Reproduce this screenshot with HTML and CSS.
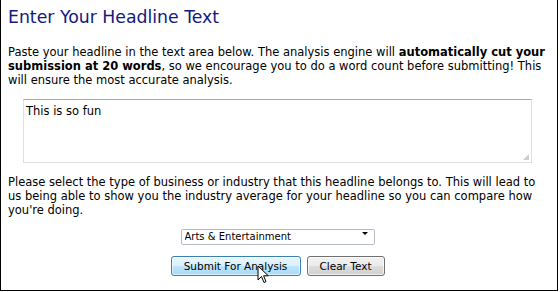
FILE: index.html
```html
<!DOCTYPE html>
<html lang="en">
<head>
  <meta charset="UTF-8" />
  <title>Headline Analyzer</title>
  <link rel="stylesheet" href="styles.css">
</head>
<body>

  <div class="panel">
    <h1>Enter Your Headline Text</h1>

    <p>Paste your headline in the text area below. The analysis engine will <strong>automatically cut your submission at 20 words</strong>, so we encourage you to do a word count before submitting! This will ensure the most accurate analysis.</p>

    <div class="text-wrap">
      <textarea id="headline">This is so fun</textarea>
    </div>

    <p>Please select the type of business or industry that this headline belongs to. This will lead to us being able to show you the industry average for your headline so you can compare how you're doing.</p>

    <div class="industry">
      <div class="select-wrap">
        <select id="industry">
          <option>Arts &amp; Entertainment</option>
          <option>Business</option>
          <option>Technology</option>
        </select>
      </div>
    </div>

    <div class="actions">
      <button class="btn btn-submit" type="button">Submit For Analysis
        <svg class="cursor" width="14" height="20" viewBox="0 0 14 20">
          <path d="M1 1 L1 15 L4.5 11.5 L7 17.5 L9 16.6 L6.6 10.8 L11.3 10.8 Z" fill="#fff" stroke="#000" stroke-width="1" stroke-linejoin="round"/>
        </svg>
      </button>
      <button class="btn btn-clear" type="button">Clear Text</button>
    </div>
  </div>

</body>
</html>
```

FILE: styles.css
```css
body {
  margin: 0;
  background-color: #fff;
  font-family: "DejaVu Sans", Verdana, sans-serif;
  color: #000;
}

.panel {
  width: 558px;
  height: 291px;
  box-sizing: border-box;
  border: 1px solid #000;
  border-top: none;
  padding: 0 8px 0 7px;
}

h1 {
  margin: 0;
  padding-top: 6px;
  font-size: 17.3px;
  font-weight: normal;
  color: #121a7c;
  line-height: 22px;
}

p {
  margin: 17px 0 0;
  font-size: 11.5px;
  line-height: 14px;
}

.text-wrap {
  position: relative;
  width: 509px;
  margin: 12px 0 0 15px;
}

.text-wrap::after {
  content: "";
  position: absolute;
  right: 3px;
  bottom: 3px;
  width: 6px;
  height: 6px;
  background: radial-gradient(circle, #b0b0b0 0.6px, transparent 0.9px) 0 0 / 2px 2px;
  clip-path: polygon(100% 0, 100% 100%, 0 100%);
}

textarea {
  display: block;
  width: 509px;
  height: 64px;
  box-sizing: border-box;
  padding: 4px 2px;
  border: 1px solid #e0e0e0;
  border-top-color: #a8a8a8;
  font-family: "DejaVu Sans", Verdana, sans-serif;
  font-size: 11.5px;
  color: #000;
  resize: none;
}

.text-wrap + p {
  margin-top: 12px;
}

.industry {
  display: flex;
  justify-content: center;
  margin-top: 8px;
  padding-right: 2px;
}

.select-wrap {
  position: relative;
}

.select-wrap::after {
  content: "";
  position: absolute;
  right: 7px;
  top: 7px;
  border-left: 3px solid transparent;
  border-right: 3px solid transparent;
  border-top: 3px solid #000;
}

select {
  appearance: none;
  -webkit-appearance: none;
  width: 194px;
  height: 16px;
  box-sizing: border-box;
  padding: 0 0 0 3px;
  border: 1px solid #b6bcc6;
  border-radius: 2px;
  background-color: #fff;
  font-family: "DejaVu Sans", Verdana, sans-serif;
  font-size: 10px;
  color: #000;
}

.actions {
  display: flex;
  justify-content: center;
  gap: 6px;
  margin-top: 11px;
  padding-right: 2px;
}

.btn {
  position: relative;
  height: 20px;
  box-sizing: border-box;
  padding: 0;
  border-radius: 3px;
  font-family: "DejaVu Sans", Verdana, sans-serif;
  font-size: 10.5px;
  white-space: nowrap;
  color: #000;
  cursor: pointer;
}

.btn-submit {
  width: 130px;
  border: 1px solid #3c7fb1;
  background: linear-gradient(#eaf6fd 0%, #d9f0fc 50%, #bee6fd 51%, #a7d9f5 100%);
  box-shadow: inset 0 0 0 1px rgba(255, 255, 255, 0.6);
}

.btn-clear {
  width: 78px;
  border: 1px solid #707070;
  background: linear-gradient(#f2f2f2 0%, #ebebeb 50%, #dddddd 51%, #cfcfcf 100%);
  box-shadow: inset 0 0 0 1px rgba(255, 255, 255, 0.7);
}

.cursor {
  position: absolute;
  left: 85px;
  top: 8px;
}
```
